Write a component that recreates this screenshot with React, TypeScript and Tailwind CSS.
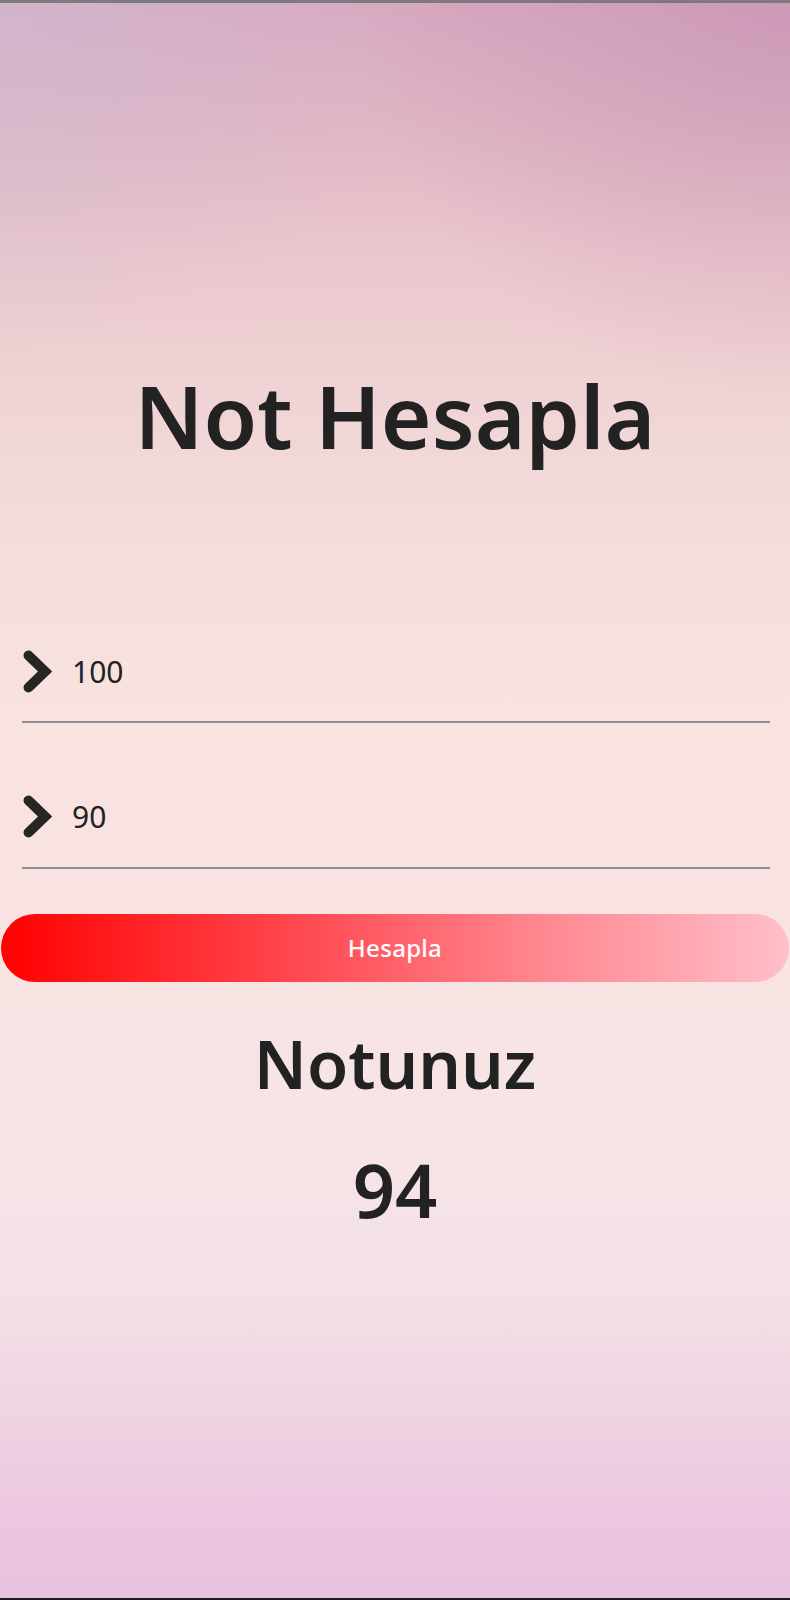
import { useState } from 'react'

function Chevron() {
  return (
    <svg width="29" height="43" viewBox="0 0 29 43" className="shrink-0">
      <polyline
        points="5.5,5.5 22,21.5 5.5,37.5"
        fill="none"
        stroke="#262626"
        strokeWidth="10"
        strokeLinecap="round"
        strokeLinejoin="miter"
      />
    </svg>
  )
}

function GradeInput({ value, onChange, last }: { value: string; onChange: (v: string) => void; last?: boolean }) {
  return (
    <div className={`mx-[22px] mr-[20px] border-b-2 border-[#8e8c96] ${last ? 'pb-[29px]' : 'pb-[28px]'}`}>
      <div className="flex items-center h-[43px] pl-[1px]">
        <Chevron />
        <input
          value={value}
          onChange={e => onChange(e.target.value)}
          className="ml-[20px] w-full bg-transparent outline-none text-[30px] leading-none text-[#222] font-['Noto_Sans',sans-serif]"
        />
      </div>
    </div>
  )
}

export default function App() {
  const [midterm, setMidterm] = useState('100')
  const [final, setFinal] = useState('90')
  const [grade, setGrade] = useState(94)

  const calc = () => {
    const v = Math.round(Number(midterm) * 0.4 + Number(final) * 0.6)
    setGrade(Number.isNaN(v) ? 0 : v)
  }

  return (
    <div className="w-[790px] h-[1600px] flex flex-col font-['Noto_Sans',sans-serif] text-[#222] bg-no-repeat bg-[radial-gradient(ellipse_55%_22%_at_0%_0%,rgba(205,188,212,0.6),rgba(205,188,212,0)),radial-gradient(ellipse_55%_25%_at_100%_0%,rgba(192,138,174,0.5),rgba(192,138,174,0)),linear-gradient(180deg,#d8a8c0_0%,#e0b6c4_8%,#eac7cd_16%,#f0d4d5_25%,#f5dedc_35%,#f8e3e1_45%,#f8e3e2_60%,#f6e4e6_72%,#f4e1e8_80%,#f0d6e3_87%,#ecc8e0_94%,#e8c1df_100%)]">
      <div className="h-[3px] bg-[#7b7a7c]" />

      <h1 className="mt-[369px] text-center text-[87px] leading-none font-semibold">
        Not Hesapla
      </h1>

      <div className="mt-[191px]">
        <GradeInput value={midterm} onChange={setMidterm} />
      </div>
      <div className="mt-[72px]">
        <GradeInput value={final} onChange={setFinal} last />
      </div>

      <button
        onClick={calc}
        className="mt-[45px] mx-[1px] h-[68px] rounded-full bg-[linear-gradient(90deg,#ff0000_0%,#ff4d55_40%,#ff8a93_70%,#ffbfc9_100%)] text-white text-[24px] font-medium tracking-[0.3px]"
      >
        Hesapla
      </button>

      <p className="mt-[48px] text-center text-[67px] leading-none font-semibold">Notunuz</p>
      <p className="mt-[56px] text-center text-[74px] leading-none font-semibold">{grade}</p>

      <div className="flex-1" />
      <div className="h-[2px] bg-[#1c1c1c]" />
    </div>
  )
}
